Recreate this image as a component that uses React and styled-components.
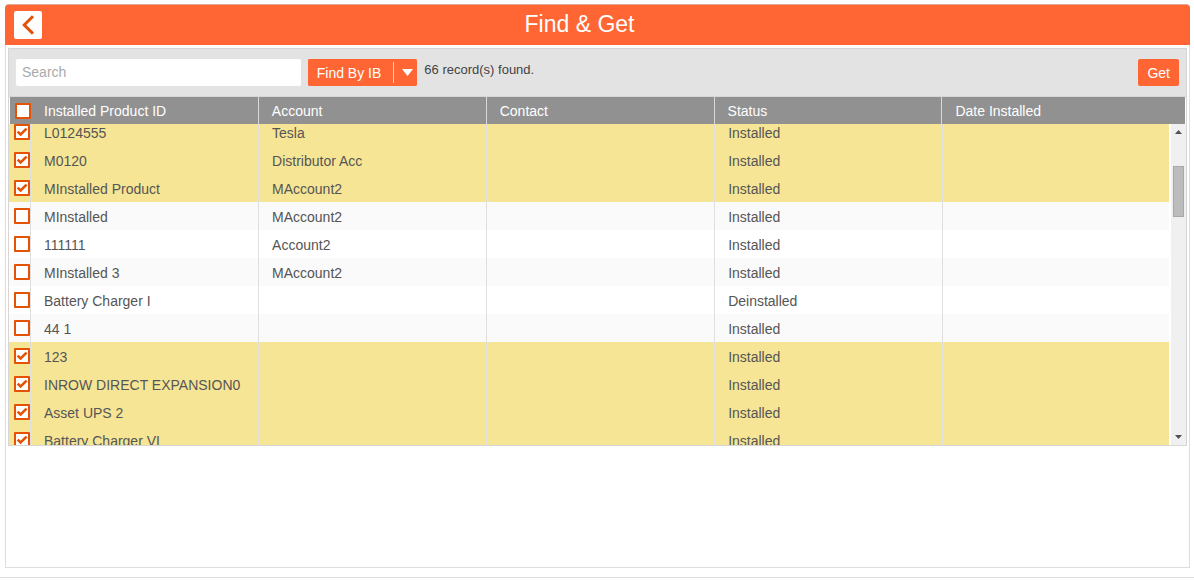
import React, { useLayoutEffect, useRef, useState } from "react";
import styled, { createGlobalStyle } from "styled-components";

const ORANGE = "#ff6633";
const RUST = "#e35205";

const GlobalStyle = createGlobalStyle`
  * { box-sizing: border-box; }
  body {
    margin: 0;
    background: #fff;
    color: #555;
    font: 14px/20px "Liberation Sans", Arial, sans-serif;
  }
  button, input { font: inherit; }
`;

const Page = styled.div`
  display: flex;
  flex-direction: column;
  min-height: calc(100vh - 8px);
  padding: 4px 4px 9px 5px;
  border-bottom: 1px solid #dcdcdc;
`;

const Panel = styled.main`
  flex: 1;
  border: 1px solid #dedede;
  border-top: 0;
  border-radius: 4px 4px 0 0;
`;

const TitleBar = styled.header`
  display: grid;
  grid-template-columns: 28px 1fr 64px;
  align-items: center;
  height: 41px;
  margin: 0 -1px;
  padding: 0 9px;
  background: ${ORANGE};
  border-top: 1px solid #e0a793;
  border-radius: 4px 4px 0 0;
`;

const BackButton = styled.button`
  display: flex;
  align-items: center;
  justify-content: center;
  width: 28px;
  height: 28px;
  padding: 0;
  border: 0;
  border-radius: 2px;
  background: #fff;
  cursor: pointer;
`;

const Title = styled.h1`
  margin: 0;
  padding-bottom: 3px;
  color: #fff;
  font-size: 23px;
  line-height: 28px;
  font-weight: 400;
  text-align: center;
`;

const Finder = styled.section`
  margin: 3px 2px 0;
  border: 1px solid #d6d6d6;
`;

const Toolbar = styled.form`
  display: flex;
  align-items: center;
  height: 48px;
  padding: 0 7px;
  background: #e3e3e3;
  border-bottom: 1px solid #d6d6d6;
`;

const SearchBox = styled.input`
  width: calc(25% - 6px);
  height: 27px;
  margin-right: 7px;
  padding: 0 6px 2px;
  border: 0;
  border-radius: 2px;
  background: #fff;
  color: #555;
  &::placeholder { color: #aaa; opacity: 1; }
`;

const SplitButton = styled.div`
  display: flex;
  height: 27px;
  border-radius: 2px;
  background: ${ORANGE};
`;

const ActionButton = styled.button`
  height: 27px;
  padding: 0 9px;
  border: 0;
  border-radius: 2px;
  background: ${ORANGE};
  color: #fff;
  cursor: pointer;
`;

const MenuButton = styled(ActionButton)`
  display: flex;
  align-items: center;
  width: 27px;
  padding: 0;
  &::before {
    content: "";
    width: 1px;
    height: 21px;
    margin: 0 8px 0 3px;
    background: #ffd0c0;
  }
`;

const RecordCount = styled.output`
  flex: 1;
  margin-left: 7px;
  padding-bottom: 5px;
  color: #444;
  font-size: 13px;
`;

const HeadArea = styled.div`
  padding-right: 16px;
  background: #919191;
  border: solid #fff;
  border-width: 0 1px;
`;

const BodyArea = styled.div`
  display: flex;
  height: 321px;
`;

const Viewport = styled.div`
  flex: 1;
  overflow: hidden;
  margin-right: 2px;
`;

const Table = styled.table`
  width: 100%;
  table-layout: fixed;
  border-collapse: separate;
  border-spacing: 0;
`;

const Row = styled.tr`
  height: 28px;
  background: ${(p) => (p.$selected ? "#f6e595" : "#fff")};
  &:nth-child(even) { background: ${(p) => (p.$selected ? "#f6e595" : "#fafafa")}; }
`;

const HeadCell = styled.th`
  width: 19.66%;
  height: 27px;
  padding: 0 13px;
  border-right: 1px solid #d8d8d8;
  color: #fff;
  font-weight: 400;
  text-align: left;
  &:last-child { width: auto; border-right: 0; }
`;

const Cell = styled.td`
  width: 19.66%;
  padding: 2px 13px 0;
  border-right: 1px solid #dfdfdf;
  white-space: nowrap;
  &:last-child { width: auto; border-right: 0; }
`;

const HeadCheckCell = styled(HeadCell)`
  width: 21px;
  padding: 1px 0 0 5px;
  border-right: 0;
`;

const CheckCell = styled(Cell)`
  width: 22px;
  padding: 0 0 0 5px;
`;

const CheckBox = styled.label`
  position: relative;
  display: block;
  width: 16px;
  height: 16px;
  input {
    appearance: none;
    display: block;
    width: 16px;
    height: 16px;
    margin: 0;
    border: 2px solid ${RUST};
    border-radius: 1px;
    background: #fff;
  }
  svg {
    position: absolute;
    inset: 0;
    pointer-events: none;
  }
`;

const ScrollTrack = styled.div`
  display: flex;
  flex-direction: column;
  align-items: center;
  width: 15px;
  background: #f0f0f0;
`;

const ScrollArrow = styled.button`
  display: flex;
  align-items: center;
  justify-content: center;
  width: 15px;
  height: 16px;
  padding: 0;
  border: 0;
  background: transparent;
`;

const ScrollThumb = styled.div`
  width: 11px;
  height: 51px;
  margin: 26px 0 auto;
  border: 1px solid #a8a8a8;
  background: #bcbcbc;
`;

const COLUMNS = ["Installed Product ID", "Account", "Contact", "Status", "Date Installed"];

const RECORDS = [
  ["L0124555", "Tesla", "", "Installed", "", true],
  ["M0120", "Distributor Acc", "", "Installed", "", true],
  ["MInstalled Product", "MAccount2", "", "Installed", "", true],
  ["MInstalled", "MAccount2", "", "Installed", "", false],
  ["111111", "Account2", "", "Installed", "", false],
  ["MInstalled 3", "MAccount2", "", "Installed", "", false],
  ["Battery Charger I", "", "", "Deinstalled", "", false],
  ["44 1", "", "", "Installed", "", false],
  ["123", "", "", "Installed", "", true],
  ["INROW DIRECT EXPANSION0", "", "", "Installed", "", true],
  ["Asset UPS 2", "", "", "Installed", "", true],
  ["Battery Charger VI", "", "", "Installed", "", true],
];

function Check({ label, checked, onChange }) {
  return (
    <CheckBox>
      <input type="checkbox" aria-label={label} checked={checked} onChange={onChange} />
      {checked && (
        <svg width="16" height="16" viewBox="0 0 16 16" fill="none" aria-hidden="true">
          <path d="M3.6 7.6 6.6 10.4 12.6 4.6" stroke={RUST} strokeWidth="2.6" />
        </svg>
      )}
    </CheckBox>
  );
}

export default function App() {
  const viewport = useRef(null);
  const [selected, setSelected] = useState(RECORDS.map((r) => r[5]));
  const allSelected = selected.every(Boolean);

  useLayoutEffect(() => {
    viewport.current.scrollTop = 6;
  }, []);

  const toggle = (index) => setSelected(selected.map((s, i) => (i === index ? !s : s)));
  const scroll = (amount) => viewport.current.scrollBy(0, amount);

  return (
    <>
      <GlobalStyle />
      <Page>
        <Panel>
          <TitleBar>
            <BackButton aria-label="Back">
              <svg width="28" height="28" viewBox="0 0 28 28" fill="none" aria-hidden="true">
                <path d="M19 5.2 10.2 14 19 22.6" stroke={RUST} strokeWidth="3" />
              </svg>
            </BackButton>
            <Title>Find &amp; Get</Title>
          </TitleBar>
          <Finder>
            <Toolbar onSubmit={(e) => e.preventDefault()}>
              <SearchBox type="text" placeholder="Search" aria-label="Search" />
              <SplitButton>
                <ActionButton type="submit">Find By IB</ActionButton>
                <MenuButton type="button" aria-label="Search options">
                  <svg width="11" height="7" viewBox="0 0 11 7" aria-hidden="true">
                    <path d="M0 0H11L5.5 7Z" fill="#fff" />
                  </svg>
                </MenuButton>
              </SplitButton>
              <RecordCount>66 record(s) found.</RecordCount>
              <ActionButton type="button">Get</ActionButton>
            </Toolbar>
            <HeadArea>
              <Table>
                <thead>
                  <tr>
                    <HeadCheckCell>
                      <Check
                        label="Select all"
                        checked={allSelected}
                        onChange={() => setSelected(RECORDS.map(() => !allSelected))}
                      />
                    </HeadCheckCell>
                    {COLUMNS.map((name) => (
                      <HeadCell key={name} scope="col">{name}</HeadCell>
                    ))}
                  </tr>
                </thead>
              </Table>
            </HeadArea>
            <BodyArea>
              <Viewport ref={viewport}>
                <Table>
                  <tbody>
                    {RECORDS.map(([id, account, contact, status, date], i) => (
                      <Row key={id} $selected={selected[i]}>
                        <CheckCell>
                          <Check label={`Select ${id}`} checked={selected[i]} onChange={() => toggle(i)} />
                        </CheckCell>
                        <Cell>{id}</Cell>
                        <Cell>{account}</Cell>
                        <Cell>{contact}</Cell>
                        <Cell>{status}</Cell>
                        <Cell>{date}</Cell>
                      </Row>
                    ))}
                  </tbody>
                </Table>
              </Viewport>
              <ScrollTrack>
                <ScrollArrow aria-label="Scroll up" onClick={() => scroll(-28)}>
                  <svg width="7" height="4" viewBox="0 0 7 4" aria-hidden="true">
                    <path d="M0 4H7L3.5 0Z" fill="#505050" />
                  </svg>
                </ScrollArrow>
                <ScrollThumb />
                <ScrollArrow aria-label="Scroll down" onClick={() => scroll(28)}>
                  <svg width="7" height="4" viewBox="0 0 7 4" aria-hidden="true">
                    <path d="M0 0H7L3.5 4Z" fill="#505050" />
                  </svg>
                </ScrollArrow>
              </ScrollTrack>
            </BodyArea>
          </Finder>
        </Panel>
      </Page>
    </>
  );
}
